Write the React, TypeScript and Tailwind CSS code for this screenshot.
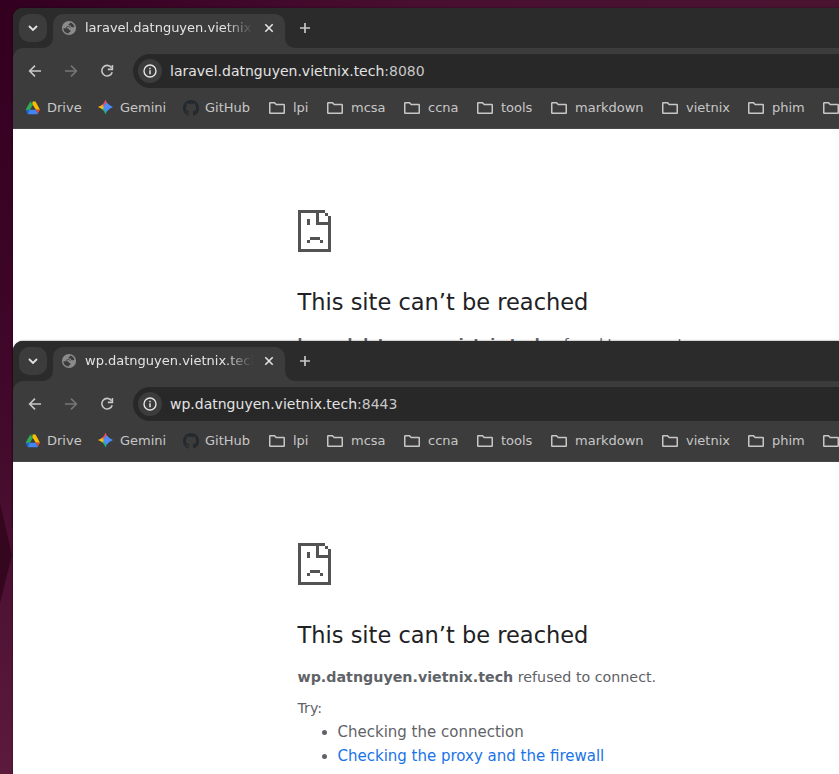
import type { ReactNode } from "react";

function GlobeIcon() {
  return (
    <svg className="size-4 shrink-0" viewBox="0 0 16 16">
      <circle cx="8" cy="8" r="7.1" fill="#8b8b8b" />
      <path
        d="M9.200 2.500c1.800.4 3.500 1.900 4.200 4-.5.700-1.300.9-2.200.8-1-.1-1.300-.8-1.500-1.700-1 .2-2.100 0-2.100-1 0-.8.500-1 1.100-1.200.4-.2.5-.5.5-.9z"
        fill="#3c3c3c"
      />
      <path
        d="M2.400 8.200h3.900c1.300 0 1.700.9 1.800 1.900.9 0 1.500.3 1.400 1.100-.1.800-.9 1-1.700 1.100v1.100C5 13.600 2.400 11.400 2.400 8.200z"
        fill="#3c3c3c"
      />
      <path d="M4.800 7.600c1-.3 1.600-1.200 2.600-1.200s1.200 1.100 2.200 1.400" fill="none" stroke="#3c3c3c" strokeWidth="0.9" />
    </svg>
  );
}

function DriveIcon() {
  return (
    <svg className="size-4 shrink-0" viewBox="0 0 16 16">
      <path d="M5.300 1.500L.7 9.500l2.200 3.800L8 4.800z" fill="#34a853" />
      <path d="M5.300 1.500h5L8 5z" fill="#188038" />
      <path d="M10.500 1.500H7.800L7.300 4l3.500 5.700H15z" fill="#fbbc04" />
      <path d="M10.800 9.700H15l-2.100 4z" fill="#ea4335" />
      <path d="M.7 9.700h4.200l-2 4.200c-.4-.1-.6-.3-.8-.7z" fill="#1967d2" />
      <path d="M4.900 9.700h5.900l2.200 4.200c-.2.200-.5.300-.9.300H3.700c-.4 0-.6-.1-.8-.3z" fill="#4285f4" />
    </svg>
  );
}

function GeminiIcon() {
  return (
    <div className="size-4 shrink-0">
      <div className="size-[15px] bg-[radial-gradient(circle_at_64%_48%,#4e8cf8_26%,transparent_42%),conic-gradient(from_0deg,#f04a5a_0deg,#4a86f7_38deg,#3186ff_150deg,#0ebc5f_185deg,#30b850_225deg,#fec700_265deg,#fb9b28_300deg,#fc413d_330deg,#f04a5a_360deg)] [clip-path:path('M7.5_0C8.900_4_11_6.100_15_7.5C11_8.900_8.900_11_7.5_15C6.100_11_4_8.900_0_7.5C4_6.100_6.100_4_7.5_0Z')]" />
    </div>
  );
}

function GitHubIcon() {
  return (
    <svg className="size-4 shrink-0" viewBox="0 0 16 16" fill="#24292e">
      <path d="M8 0C3.580 0 0 3.580 0 8c0 3.540 2.290 6.530 5.470 7.590.4.070.55-.17.55-.38 0-.19-.01-.82-.01-1.490-2.010.37-2.530-.49-2.690-.94-.09-.23-.48-.94-.82-1.130-.28-.15-.68-.52-.01-.53.63-.01 1.080.58 1.230.82.72 1.210 1.870.87 2.330.66.07-.52.28-.87.51-1.070-1.780-.2-3.640-.89-3.640-3.950 0-.87.31-1.590.82-2.150-.08-.2-.36-1.020.08-2.120 0 0 .67-.21 2.200.82.64-.18 1.320-.27 2-.27s1.360.09 2 .27c1.530-1.040 2.200-.82 2.200-.82.44 1.100.16 1.920.08 2.120.51.56.82 1.270.82 2.150 0 3.070-1.870 3.750-3.650 3.950.29.25.54.73.54 1.480 0 1.070-.01 1.930-.01 2.200 0 .21.15.46.55.38A8.010 8.010 0 0 0 16 8c0-4.420-3.580-8-8-8z" />
    </svg>
  );
}

function FolderIcon() {
  return (
    <svg className="size-4 shrink-0" viewBox="0 0 16 16" fill="none" stroke="#c7c7c7" strokeWidth="1.5">
      <path d="M.75 12.600V3.200c0-.3.200-.45.450-.45h4.300L7.200 4.500h7.600c.3 0 .45.200.45.450v8c0 .3-.15.400-.45.400H1.200c-.3 0-.45-.1-.45-.4z" />
    </svg>
  );
}

function Mark({ icon, label, width, gap = "gap-1.5" }: { icon: ReactNode; label: string; width: string; gap?: string }) {
  return (
    <div className={`flex shrink-0 items-center ${gap} ${width}`}>
      {icon}
      <span className="whitespace-nowrap">{label}</span>
    </div>
  );
}

const folders = [
  { label: "lpi", width: "w-[58px]" },
  { label: "mcsa", width: "w-[77px]" },
  { label: "ccna", width: "w-[73px]" },
  { label: "tools", width: "w-[74px]" },
  { label: "markdown", width: "w-[111px]" },
  { label: "vietnix", width: "w-[86px]" },
  { label: "phim", width: "w-[75px]" },
  { label: "", width: "w-4" },
];

function TabStrip({ title }: { title: string }) {
  return (
    <div className="flex h-10 bg-[#2b2b2b]">
      <div className="h-10 w-10 bg-[#3c3c3c]">
        <div className="flex h-10 w-10 rounded-br-[10px] bg-[#2b2b2b] pl-1.5 pt-1.5">
          <div className="flex size-7 items-center justify-center rounded-[10px] bg-[#3c3c3c]">
            <svg className="size-3" viewBox="0 0 12 12" fill="none" stroke="#e3e3e3" strokeWidth="1.8">
              <path d="M2 4l4 4 4-4" />
            </svg>
          </div>
        </div>
      </div>
      <div className="h-10 w-[232px] pt-1.5">
        <div className="flex h-[34px] items-start rounded-t-[10px] bg-[#3c3c3c] pl-2 pt-1.5">
          <GlobeIcon />
          <span className="ml-2 w-[168px] overflow-hidden whitespace-nowrap text-[13px] leading-4 text-[#e3e3e3] [mask-image:linear-gradient(to_right,black_140px,transparent_168px)]">
            {title}
          </span>
          <svg className="ml-2 size-4 shrink-0" viewBox="0 0 16 16" stroke="#e3e3e3" strokeWidth="1.6">
            <path d="M4.300 4.300l7.400 7.400M11.700 4.300l-7.400 7.400" />
          </svg>
        </div>
      </div>
      <div className="h-10 flex-1 bg-[#3c3c3c]">
        <div className="h-10 rounded-bl-[10px] bg-[#2b2b2b] pl-3 pt-3">
          <svg className="size-4" viewBox="0 0 16 16" stroke="#c7c7c7" strokeWidth="1.7">
            <path d="M8 3v10M3 8h10" />
          </svg>
        </div>
      </div>
    </div>
  );
}

function Toolbar({ host, port }: { host: string; port: string }) {
  return (
    <div className="bg-[#2b2b2b]">
      <div className="flex h-10 items-end rounded-tl-[10px] bg-[#3c3c3c] pl-3.5">
        <div className="flex h-[34px] w-[106px] shrink-0 items-center gap-5">
          <svg className="size-4" viewBox="0 0 16 16" fill="none" stroke="#c7c7c7" strokeWidth="1.6">
            <path d="M14 8H3M8 2.600L2.600 8 8 13.400" />
          </svg>
          <svg className="size-4" viewBox="0 0 16 16" fill="none" stroke="#757575" strokeWidth="1.6">
            <path d="M2 8h11M8 2.600L13.400 8 8 13.400" />
          </svg>
          <svg className="size-4" viewBox="0 0 16 16" fill="none" stroke="#c7c7c7" strokeWidth="1.6">
            <path d="M12.400 4.600A5.300 5.300 0 1 0 13.200 9.200M13.400 2v4.400H8.800" />
          </svg>
        </div>
        <div className="flex h-[34px] flex-1 items-center rounded-l-full bg-[#282828] pl-[5px]">
          <div className="flex size-6 items-center justify-center rounded-full bg-[#3c3c3c]">
            <svg className="size-4" viewBox="0 0 16 16" fill="none" stroke="#e3e3e3" strokeWidth="1.4">
              <circle cx="8" cy="8" r="6" />
              <path d="M8 7.200v4M8 4.700v1.500" strokeWidth="1.5" />
            </svg>
          </div>
          <div className="ml-2 whitespace-nowrap text-[14px] leading-5 text-[#e3e3e3]">
            {host}
            <span className="text-[#c7c7c7]">:{port}</span>
          </div>
        </div>
      </div>
      <div className="flex h-[41px] overflow-hidden border-b border-[#474747] bg-[#3c3c3c] pl-3 text-[13px] leading-4 text-[#c7c7c7]">
        <div className="flex h-[39px] items-center">
          <Mark icon={<DriveIcon />} label="Drive" width="w-[73px]" />
          <Mark icon={<GeminiIcon />} label="Gemini" width="w-[85px]" />
          <Mark icon={<GitHubIcon />} label="GitHub" width="w-[86px]" />
          {folders.map((f) => (
            <Mark key={f.label} icon={<FolderIcon />} label={f.label} width={f.width} gap="gap-2" />
          ))}
        </div>
      </div>
    </div>
  );
}

function ErrorPage({ host }: { host: string }) {
  return (
    <main className="h-[400px] whitespace-nowrap bg-white pl-[284.5px] pt-[81px] text-[15px] leading-6 text-[#5f6368]">
      <svg className="ml-[0.5px] h-[42px] w-[33px]" viewBox="0 0 11 14" fill="#535353" shapeRendering="crispEdges">
        <path d="M0 0h9v1h1v1h1v12H0zM1 1v12h9V5H6V1zM7 1v3h3V2H9V1z" fillRule="evenodd" />
        <path d="M3 3h1v2H3zM4 9h3.330v1H4zM3 10h1v1H3zM7.330 10h1v1h-1z" />
      </svg>
      <h1 className="mt-[35px] text-[22.5px] leading-[30px] text-[#202124]">This site can’t be reached</h1>
      <p className="mt-[15px] text-[14.25px]">
        <strong>{host}</strong> refused to connect.
      </p>
      <p className="mt-[7px] text-[14.25px]">Try:</p>
      <ul className="list-disc pl-10">
        <li>Checking the connection</li>
        <li className="text-[#1a73e8] marker:text-[#5f6368]">Checking the proxy and the firewall</li>
      </ul>
    </main>
  );
}

function BrowserWindow({ host, port, tab, top }: { host: string; port: string; tab: string; top: string }) {
  return (
    <section
      className={`absolute left-[13px] w-[900px] overflow-hidden rounded-t-[10px] bg-[#2b2b2b] shadow-[0_0_2px_rgba(0,0,0,0.6)] ${top}`}
    >
      <TabStrip title={tab} />
      <Toolbar host={host} port={port} />
      <ErrorPage host={host} />
    </section>
  );
}

export default function App() {
  return (
    <div className="relative h-[774px] w-[839px] overflow-hidden bg-[#37021f] font-['DejaVu_Sans',sans-serif]">
      <div className="h-2 bg-linear-to-r from-[#330020] via-[#490f31] to-[#4a1431]" />
      <div className="h-[766px] w-[13px] bg-linear-to-b from-[#330020] via-[#40082a] to-[#5c1a3d]">
        <svg className="h-full w-full" viewBox="0 0 13 766">
          <path d="M0 495l12 52-12 48z" fill="#35071f" />
        </svg>
      </div>
      <BrowserWindow host="laravel.datnguyen.vietnix.tech" port="8080" tab="laravel.datnguyen.vietnix.tech" top="top-2" />
      <BrowserWindow host="wp.datnguyen.vietnix.tech" port="8443" tab="wp.datnguyen.vietnix.tech" top="top-[341px]" />
    </div>
  );
}
